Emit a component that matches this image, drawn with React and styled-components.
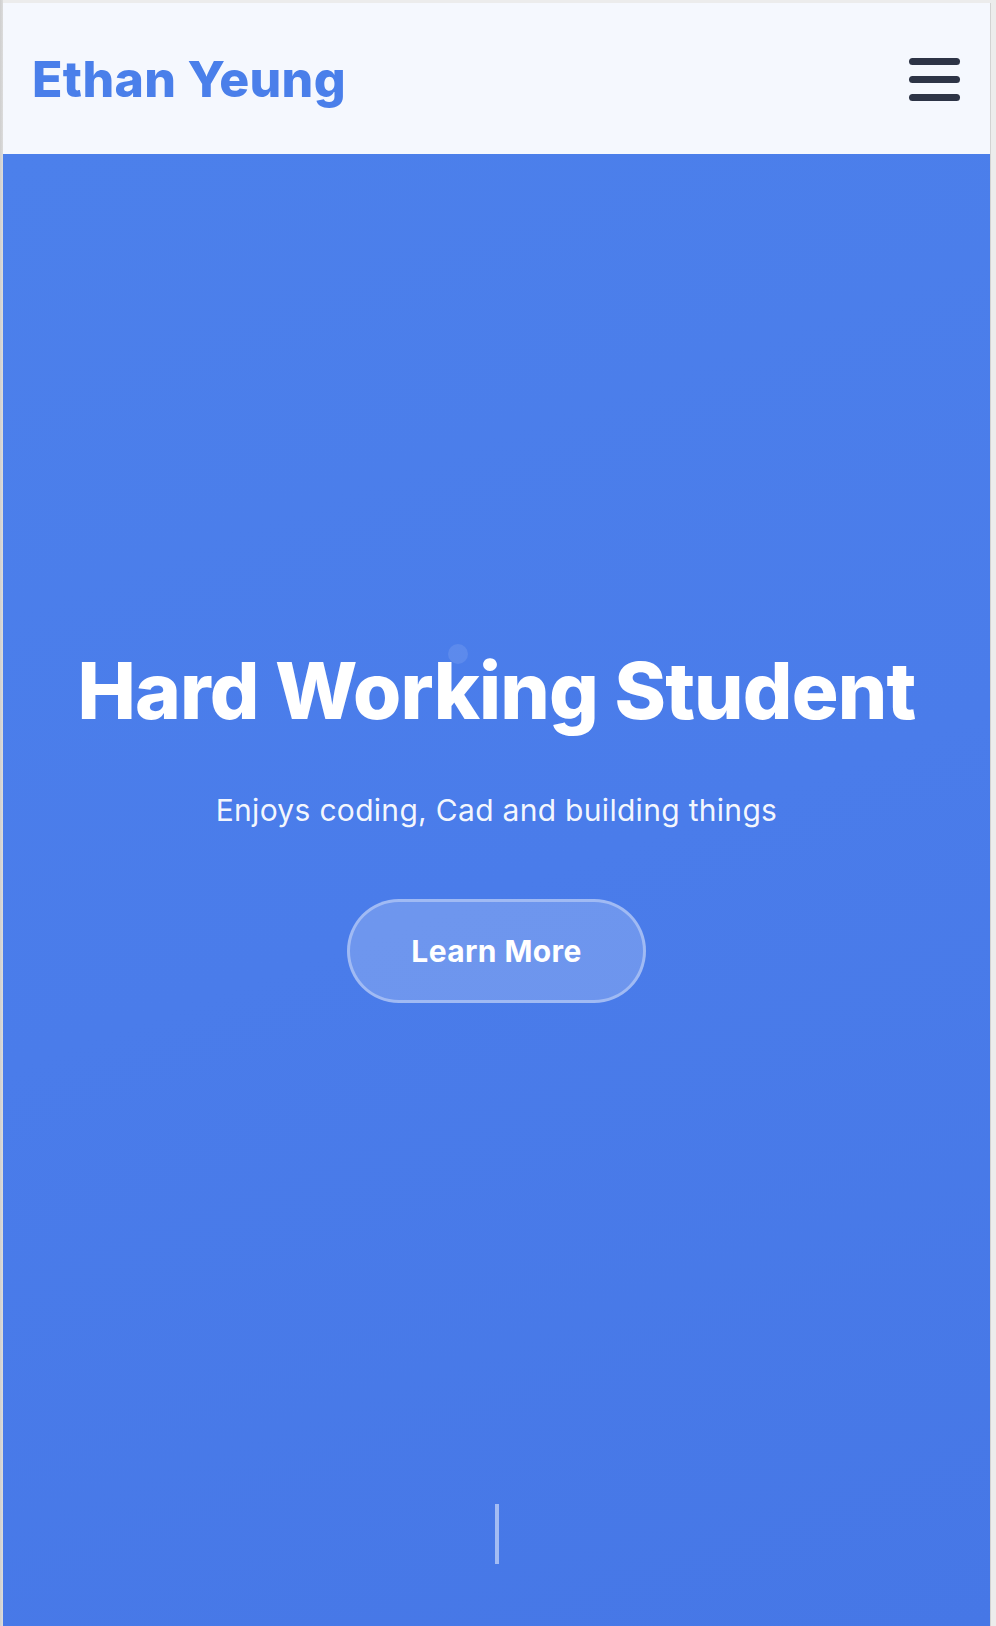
import styled, { createGlobalStyle } from 'styled-components';

const GlobalStyle = createGlobalStyle`
  * {
    box-sizing: border-box;
  }
  html, body {
    margin: 0;
    padding: 0;
    background: #ececec;
  }
  body {
    font-family: Inter, "Noto Sans", sans-serif;
  }
`;

function App() {
  return (
    <>
      <GlobalStyle />
      <Frame>
        <Page>
          <Header>
            <Logo>Ethan Yeung</Logo>
            <MenuButton aria-label="menu">
              <MenuBar />
              <MenuBar />
              <MenuBar />
            </MenuButton>
          </Header>
          <Hero>
            <Particle />
            <HeroTitle>Hard Working Student</HeroTitle>
            <HeroSubtitle>Enjoys coding, Cad and building things</HeroSubtitle>
            <LearnButton>Learn More</LearnButton>
            <ScrollLine />
          </Hero>
        </Page>
      </Frame>
    </>
  );
}

export default App;

const Frame = styled.div`
  width: 996px;
  height: 1626px;
  overflow: hidden;
  padding: 3px 4px 0 3px;
  background: linear-gradient(90deg, #cfcfcf 0, #dcdcdc 3px, #ececec 3px);
`;

const Page = styled.main`
  display: flex;
  flex-direction: column;
  width: 988px;
  height: 1623px;
  border-right: 1px solid #d2d2d2;
  overflow: hidden;
`;

const Header = styled.header`
  display: flex;
  justify-content: space-between;
  align-items: center;
  height: 151px;
  padding: 0 30px 0 29px;
  background-color: #f5f8fe;
  flex-shrink: 0;
`;

const Logo = styled.h1`
  margin: 0;
  font-size: 50px;
  font-weight: 800;
  line-height: 1;
  letter-spacing: 0.3px;
  color: #4a7fea;
`;

const MenuButton = styled.button`
  display: flex;
  flex-direction: column;
  gap: 11px;
  width: 51px;
  padding: 0;
  margin-top: 2px;
  border: none;
  background: none;
  cursor: pointer;
`;

const MenuBar = styled.span`
  display: block;
  width: 51px;
  height: 7px;
  border-radius: 4px;
  background-color: #2d3446;
`;

const Hero = styled.section`
  position: relative;
  flex: 1;
  display: flex;
  flex-direction: column;
  align-items: center;
  padding-top: 490px;
  background: linear-gradient(160deg, #4c80eb 0%, #4a7cea 50%, #4677e6 100%);
  color: #ffffff;
`;

const Particle = styled.span`
  position: absolute;
  top: 490px;
  left: 445px;
  width: 20px;
  height: 20px;
  border-radius: 50%;
  background: rgba(255, 255, 255, 0.1);
`;

const HeroTitle = styled.h2`
  margin: 0;
  font-size: 78px;
  font-weight: 800;
  line-height: 1.2;
  letter-spacing: -0.8px;
  text-align: center;
`;

const HeroSubtitle = styled.p`
  margin: 50px 0 0;
  font-size: 30px;
  font-weight: 400;
  line-height: 1.5;
  letter-spacing: 0.3px;
  color: rgba(255, 255, 255, 0.95);
`;

const LearnButton = styled.button`
  margin-top: 66px;
  padding: 31px 61px;
  border: 3px solid rgba(255, 255, 255, 0.35);
  border-radius: 60px;
  background: rgba(255, 255, 255, 0.2);
  color: #ffffff;
  font-family: Inter, "Noto Sans", sans-serif;
  font-size: 30px;
  font-weight: 700;
  line-height: 1.2;
  letter-spacing: 0.4px;
  cursor: pointer;
`;

const ScrollLine = styled.span`
  display: block;
  margin-top: auto;
  margin-bottom: 62px;
  width: 4px;
  height: 60px;
  background: rgba(255, 255, 255, 0.5);
`;
